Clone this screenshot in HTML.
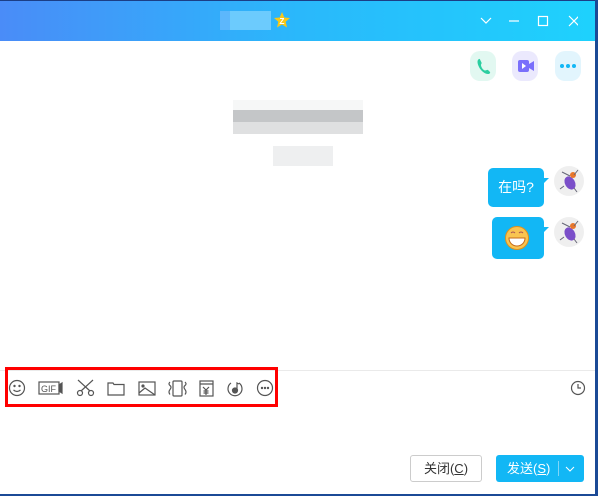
<!DOCTYPE html>
<html><head><meta charset="utf-8"><style>
*{margin:0;padding:0;box-sizing:border-box}
body{width:598px;height:496px;overflow:hidden;background:#fff;font-family:"Liberation Sans","Noto Sans CJK SC",sans-serif;position:relative}
.abs{position:absolute}
.title{left:0;top:0;width:598px;height:41px;background:linear-gradient(90deg,#4a8cf8,#2ab8fb 50%,#1ed2fd);border-top:1px solid #1b3e86}
.rb{right:0;top:0;width:3px;height:496px;background:#1b4a96}
.bb{left:0;bottom:0;width:598px;height:2px;background:#1b4a96}
.ib{width:26px;height:30px;border-radius:10px;top:51px}
.bub{background:#12b7f5;border-radius:5px;color:#fff}
.btn{height:27px;top:455px;border-radius:3px;font-size:13px;line-height:25px;text-align:center}
svg{position:absolute}
</style></head><body>
<div class="abs title"></div>
<div class="abs" style="left:220px;top:11px;width:10px;height:19px;background:#5cb7fc"></div>
<div class="abs" style="left:230px;top:11px;width:41px;height:19px;background:#6ccbfd"></div>
<svg style="left:274px;top:12px" width="16" height="16" viewBox="0 0 16 16"><polygon points="8,0 10.3,5.5 16,6 11.7,9.8 13,15.5 8,12.5 3,15.5 4.3,9.8 0,6 5.7,5.5" fill="#f7c817"/><text x="8" y="12" font-size="8" font-weight="bold" fill="#fff" text-anchor="middle" font-family="Liberation Sans">Z</text></svg>
<svg style="left:478px;top:12px" width="100" height="18" viewBox="0 0 100 18" fill="none" stroke="#fff" stroke-width="1.2"><path d="M3 6l5 5 5-5"/><path d="M31 9h10"/><rect x="60.5" y="4.5" width="9" height="9"/><path d="M95 4l10 10M105 4l-10 10" transform="translate(-4,0)"/></svg>
<div class="abs ib" style="left:470px;background:#e2f8f1"></div>
<svg style="left:476px;top:57px" width="16" height="18" viewBox="0 0 16 18"><path d="M3 2c-2 1-2 4 0 8s6 7 9 7c1.5 0 2.5-1 2-2l-2-2c-1-.5-2 .5-3 .5C7 13 5 10 5 8c0-1 1-1.5.5-2.5L4 2.5C3.7 2 3.3 1.8 3 2z" fill="#2bcea0"/></svg>
<div class="abs ib" style="left:512px;background:#ebe9fd"></div>
<svg style="left:517px;top:58px" width="18" height="16" viewBox="0 0 18 16"><rect x="1" y="2" width="11" height="12" rx="2" fill="#7a6ffb"/><path d="M12 6l5-3v10l-5-3z" fill="#7a6ffb"/><path d="M5 5v6l4-3z" fill="#fff"/></svg>
<div class="abs ib" style="left:555px;background:#e2f5fd"></div>
<svg style="left:559px;top:63px" width="18" height="6"><circle cx="3" cy="3" r="2" fill="#12b7f5"/><circle cx="9" cy="3" r="2" fill="#12b7f5"/><circle cx="15" cy="3" r="2" fill="#12b7f5"/></svg>
<div class="abs" style="left:233px;top:100px;width:130px;height:10px;background:#f6f7f7"></div>
<div class="abs" style="left:233px;top:110px;width:130px;height:12px;background:#c4c6c8"></div>
<div class="abs" style="left:233px;top:122px;width:130px;height:12px;background:#dfe0e1"></div>
<div class="abs" style="left:273px;top:146px;width:60px;height:20px;background:#eeeff0"></div>
<div class="abs bub" style="left:488px;top:168px;width:56px;height:39px;font-size:14px;line-height:39px;text-align:center">在吗?</div>
<svg style="left:542px;top:178px" width="8" height="8"><path d="M0 0L7 0L0 7z" fill="#12b7f5"/></svg>
<div class="abs bub" style="left:492px;top:217px;width:52px;height:42px"></div>
<svg style="left:542px;top:227px" width="8" height="8"><path d="M0 0L7 0L0 7z" fill="#12b7f5"/></svg>
<svg style="left:505px;top:226px" width="24" height="24" viewBox="0 0 24 24"><circle cx="12" cy="12" r="11.5" fill="#f9c450" stroke="#e0901a"/><path d="M4 12h16c0 5-4 8-8 8s-8-3-8-8z" fill="#fff" stroke="#c56b1a"/><path d="M6 7q2-2 4 0M14 7q2-2 4 0" stroke="#a55" fill="none"/></svg>
<svg style="left:554px;top:166px" width="30" height="30" viewBox="0 0 30 30"><circle cx="15" cy="15" r="15" fill="#efefef"/><ellipse cx="16" cy="17" rx="5" ry="7" fill="#7b4fc9" transform="rotate(-30 16 17)"/><circle cx="19" cy="9" r="3" fill="#e8762b"/><path d="M8 6l8 4M24 4l-4 5M10 20l-4 3M20 22l3 4" stroke="#667" fill="none"/></svg>
<svg style="left:554px;top:217px" width="30" height="30" viewBox="0 0 30 30"><circle cx="15" cy="15" r="15" fill="#efefef"/><ellipse cx="16" cy="17" rx="5" ry="7" fill="#7b4fc9" transform="rotate(-30 16 17)"/><circle cx="19" cy="9" r="3" fill="#e8762b"/><path d="M8 6l8 4M24 4l-4 5M10 20l-4 3M20 22l3 4" stroke="#667" fill="none"/></svg>
<div class="abs" style="left:0;top:370px;width:595px;height:1px;background:#eaeaea"></div>
<div class="abs" style="left:5px;top:367px;width:273px;height:40px;border:3px solid #f00"></div>
<svg style="left:8px;top:378px" width="270" height="20" viewBox="0 0 270 20" fill="none" stroke="#555" stroke-width="1.2">
<circle cx="9" cy="10" r="7.5"/><circle cx="6.5" cy="8" r=".6" fill="#555"/><circle cx="11.5" cy="8" r=".6" fill="#555"/><path d="M5.5 12q3.5 3 7 0"/>
<rect x="31" y="4" width="20" height="12"/><text x="33" y="14" font-size="9" fill="#555" stroke="none" font-family="Liberation Sans">GIF</text><path d="M51 7l3-2v10l-3-2z" fill="#555"/>
<circle cx="72" cy="15" r="2.5"/><circle cx="83" cy="15" r="2.5"/><path d="M70 2l12 11M85 2L73 13"/>
<path d="M100 5h5l1 1.5h10V17h-16z"/>
<rect x="131" y="4" width="16" height="13"/><circle cx="135" cy="8" r="1" fill="#555"/><path d="M131 15l6-5 10 7"/>
<rect x="165" y="3" width="9" height="15" rx="1"/><path d="M162 4q-2 2 0 3.5t0 4 0 5M177 4q2 2 0 3.5t0 4 0 5"/>
<rect x="192" y="3" width="13" height="15"/><path d="M192 6h13M195 9l3 3 3-3M198 12v5M195.5 13h5M195.5 15h5"/>
<path d="M223 5a7 7 0 1 0 8 0"/><circle cx="227" cy="12.5" r="2.5" fill="#555"/><path d="M229 12V5l2 1"/>
<circle cx="257" cy="10" r="7.5"/><circle cx="254" cy="10" r=".6" fill="#555"/><circle cx="257" cy="10" r=".6" fill="#555"/><circle cx="260" cy="10" r=".6" fill="#555"/>
</svg>
<svg style="left:570px;top:380px" width="16" height="16" fill="none" stroke="#555" stroke-width="1.2"><circle cx="8" cy="8" r="6.5"/><path d="M8 4v4h3"/></svg>
<div class="abs btn" style="left:410px;width:72px;border:1px solid #ccc;color:#333">关闭(<u>C</u>)</div>
<div class="abs btn" style="left:496px;width:88px;background:#12b7f5;color:#fff;line-height:27px"><span style="position:absolute;left:11px">发送(<u>S</u>)</span><span style="position:absolute;left:62px;top:6px;width:1px;height:15px;background:#7fd6f9"></span><svg style="left:68px;top:10px" width="12" height="8"><path d="M2 2l4 4 4-4" stroke="#fff" fill="none"/></svg></div>
<div class="abs rb"></div><div class="abs bb"></div>
</body></html>
